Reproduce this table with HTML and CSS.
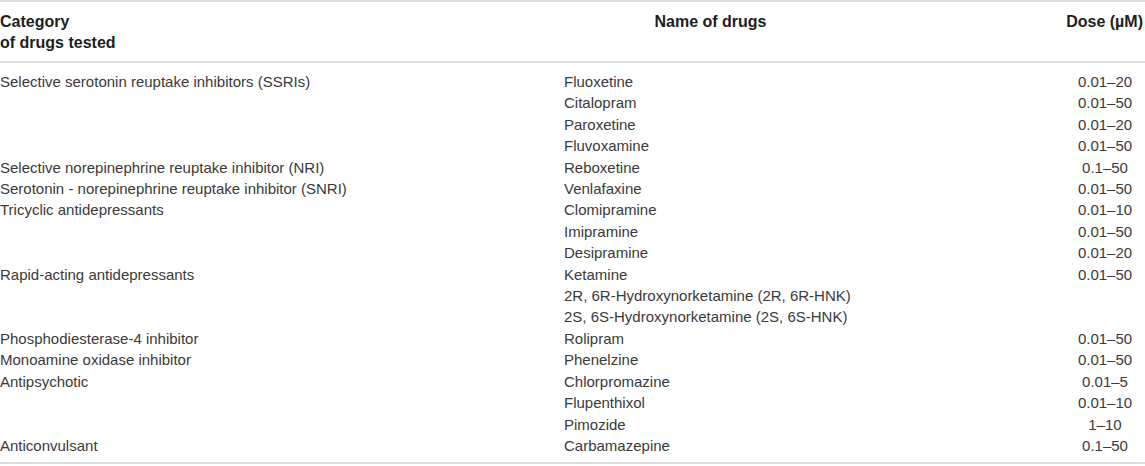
FILE: index.html
```html
<!DOCTYPE html>
<html>
<head>
<meta charset="utf-8">
<link rel="stylesheet" href="styles.css">
</head>
<body>
<table class="drugs">
  <colgroup>
    <col class="c-cat">
    <col class="c-name">
    <col class="c-dose">
  </colgroup>
  <thead>
    <tr>
      <th class="h-cat">Category<br>of drugs tested</th>
      <th class="h-name">Name of drugs</th>
      <th class="h-dose">Dose (µM)</th>
    </tr>
  </thead>
  <tbody>
    <tr class="first"><td>Selective serotonin reuptake inhibitors (SSRIs)</td><td>Fluoxetine</td><td class="dose">0.01–20</td></tr>
    <tr><td></td><td>Citalopram</td><td class="dose">0.01–50</td></tr>
    <tr><td></td><td>Paroxetine</td><td class="dose">0.01–20</td></tr>
    <tr><td></td><td>Fluvoxamine</td><td class="dose">0.01–50</td></tr>
    <tr><td>Selective norepinephrine reuptake inhibitor (NRI)</td><td>Reboxetine</td><td class="dose">0.1–50</td></tr>
    <tr><td>Serotonin - norepinephrine reuptake inhibitor (SNRI)</td><td>Venlafaxine</td><td class="dose">0.01–50</td></tr>
    <tr><td>Tricyclic antidepressants</td><td>Clomipramine</td><td class="dose">0.01–10</td></tr>
    <tr><td></td><td>Imipramine</td><td class="dose">0.01–50</td></tr>
    <tr><td></td><td>Desipramine</td><td class="dose">0.01–20</td></tr>
    <tr><td>Rapid-acting antidepressants</td><td>Ketamine</td><td class="dose">0.01–50</td></tr>
    <tr><td></td><td>2R, 6R-Hydroxynorketamine (2R, 6R-HNK)</td><td class="dose"></td></tr>
    <tr><td></td><td>2S, 6S-Hydroxynorketamine (2S, 6S-HNK)</td><td class="dose"></td></tr>
    <tr><td>Phosphodiesterase-4 inhibitor</td><td>Rolipram</td><td class="dose">0.01–50</td></tr>
    <tr><td>Monoamine oxidase inhibitor</td><td>Phenelzine</td><td class="dose">0.01–50</td></tr>
    <tr><td>Antipsychotic</td><td>Chlorpromazine</td><td class="dose">0.01–5</td></tr>
    <tr><td></td><td>Flupenthixol</td><td class="dose">0.01–10</td></tr>
    <tr><td></td><td>Pimozide</td><td class="dose">1–10</td></tr>
    <tr class="last"><td>Anticonvulsant</td><td>Carbamazepine</td><td class="dose">0.1–50</td></tr>
  </tbody>
</table>
</body>
</html>
```
FILE: styles.css
```css
html, body {
  margin: 0;
  padding: 0;
  background: #ffffff;
}

body {
  font-family: "Liberation Sans", Arial, sans-serif;
  font-size: 15px;
  color: #3a3a3a;
}

.drugs {
  width: 1145px;
  border-collapse: collapse;
  table-layout: fixed;
  border-top: 2px solid #dcdcdc;
  border-bottom: 2px solid #dcdcdc;
}

.c-cat { width: 564px; }
.c-name { width: 501px; }
.c-dose { width: 80px; }

.drugs th {
  font-size: 16px;
  font-weight: bold;
  color: #1e1e1e;
  line-height: 21px;
  padding: 9px 0 8px 0;
  vertical-align: top;
  border-bottom: 2px solid #dcdcdc;
  white-space: nowrap;
}

.h-cat { text-align: left; }
.h-name { text-align: center; padding-right: 208px !important; }
.h-dose { text-align: right; padding-right: 2px !important; }

.drugs td {
  padding: 0;
  line-height: 21.4px;
  white-space: nowrap;
  vertical-align: top;
}

.drugs td.dose { text-align: center; }

.drugs tr.first td { padding-top: 8px; }
.drugs tr.last td { padding-bottom: 6px; }
```
